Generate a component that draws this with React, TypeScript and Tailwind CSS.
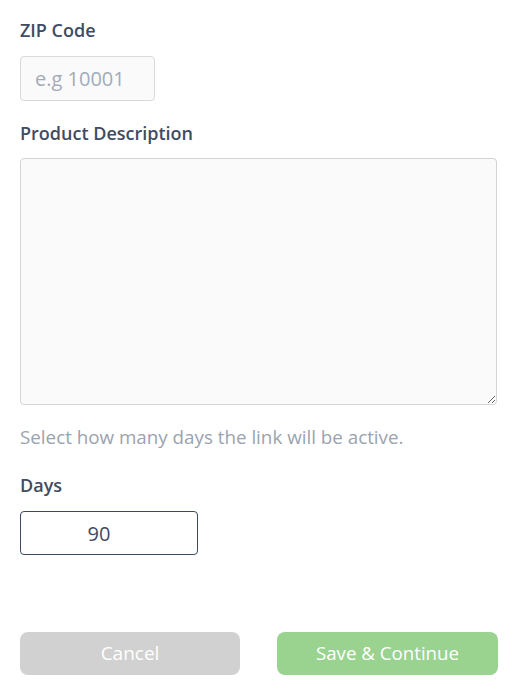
export default function App() {
  return (
    <div className="w-[518px] h-[692px] bg-white px-5 pt-[18px] font-['Open_Sans','Noto_Sans',sans-serif]">
      <label className="block text-[18px] font-semibold leading-6 text-[#3f4b63]">ZIP Code</label>
      <input
        placeholder="e.g 10001"
        className="mt-[14px] block w-[135px] h-[45px] rounded border border-[#d9d9d9] bg-[#fafafa] px-[14px] text-[20px] text-[#3f4b63] placeholder:text-[#a3abb8] outline-none"
      />
      <label className="mt-[20px] block text-[18px] font-semibold leading-6 text-[#3f4b63]">Product Description</label>
      <textarea className="mt-[13px] block w-[477px] h-[247px] rounded border border-[#d4d4d4] bg-[#fafafa] outline-none" />
      <p className="mt-[20px] text-[18.8px] leading-6 text-[#9aa3b0]">Select how many days the link will be active.</p>
      <label className="mt-[24px] block text-[18px] font-semibold leading-6 text-[#3f4b63]">Days</label>
      <input
        defaultValue="90"
        className="mt-[14px] block w-[178px] h-[44px] rounded border border-[#3d4a63] bg-white pr-5 text-center text-[20px] text-[#3f4b63] outline-none"
      />
      <div className="mt-[77px] flex justify-between">
        <button className="w-[220px] h-[43px] rounded-lg bg-[#d1d1d1] text-[19px] text-white">Cancel</button>
        <button className="w-[221px] h-[43px] rounded-lg bg-[#9ad290] text-[18.7px] text-white">Save &amp; Continue</button>
      </div>
    </div>
  );
}
